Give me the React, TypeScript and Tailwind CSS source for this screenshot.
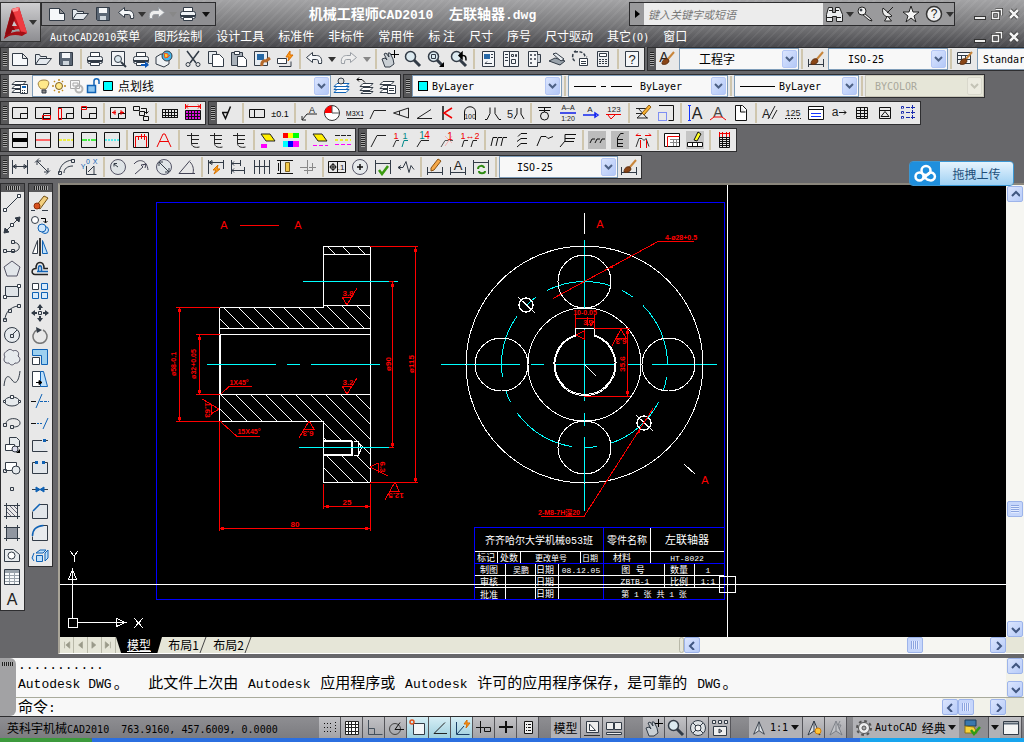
import type { ReactNode } from 'react';

const INK = '#323b46';
const BLUE = '#0f62b5';
const RED = '#f00000';

interface LabelProps {
  x: number;
  y: number;
  s?: number;
  c?: string;
  children: ReactNode;
}

function T({ x, y, s = 9, c = '#222', children }: LabelProps) {
  return (
    <text x={x} y={y} fontSize={s} fill={c} stroke="none" textAnchor="middle" fontFamily="Liberation Sans, Noto Sans CJK SC, sans-serif">
      {children}
    </text>
  );
}

const sheet = <path d="M1.5 3.5h10l5 5v7h-15zM11.5 3.5v5h5" fill="#f6f8fa" />;
const floppy = (
  <>
    <path d="M2.5 2.5h13v13h-12l-1-1z" fill="#5b6775" />
    <path d="M5 3h8v5h-8z" fill="#f4f6f8" stroke="none" />
    <path d="M6 11h6v4h-6z" fill="#cdd5dc" stroke="none" />
  </>
);
const folder = <path d="M1.5 14.5v-10h4l1 2h6v2M1.5 14.5l4-6h12l-5 6z" fill="#e4e9ee" />;
const printer = (
  <>
    <path d="M4.5 6v-3.5h9v3.5" fill="#fff" />
    <rect x="1.5" y="6.5" width="15" height="7" rx="2" fill="#eef1f4" />
    <path d="M2 11h14" strokeWidth="2" />
    <path d="M4.5 12.5h9v3h-9z" fill="#fff" />
  </>
);
const undo = <path d="M7.5 2.5l-6 5 6 5v-3h4c2 0 2 2 2 4h3c1-6-2-8-5-8h-4z" fill="#f4f6f8" />;
const redo = <path d="M10.5 2.5l6 5-6 5v-3h-4c-2 0-2 2-2 4h-3c-1-6 2-8 5-8h4z" fill="#eee" stroke="#9a9fa5" />;
const lens = (
  <>
    <path d="M10 10l6 6" strokeWidth="3" />
    <circle cx="6.5" cy="6.5" r="5" fill="#dceaf0" strokeWidth="1.5" />
  </>
);
const hand = (
  <>
    <path d="M1 9l3-1 2 2-3-6 2-1 3 4-1-4 2 0 3 6 1 5-4 3h-5z" fill="#c9cfd4" />
    <path d="M13.5 0v8M10 4.5h8" stroke="#000" />
  </>
);
const brush = (
  <>
    <path d="M10 9l6-7" stroke="#c8853a" strokeWidth="2" />
    <path d="M4 14c0-4 3-6 6-5l1 2c-1 3-4 4-7 3z" fill="#8a4516" stroke="#5c2c0c" />
  </>
);
const layers = <path d="M4 4.5h11l-3 3h-11zM4 8.5h11l-3 3h-11zM4 12.5h11l-3 3h-11z" fill="#fff" />;
const flange = <path d="M1.5 3.5h15v11h-15zM16.5 9.5h-7v5" stroke="#111" />;
const box = <path d="M1.5 1.5h15v15h-15z" stroke="#111" />;
const datum = <path d="M3 4.5h12M7.5 2v10c0 4 4 5 8 4M15 8.5h-7M14 12.5h-6" stroke="#222" />;
const sponge = <path d="M2 3h9l5 7h-9z" fill="#ffee00" stroke="#222" />;
const compass = <path d="M9 2l6 14-6-4-6 4zM9 2v10" fill="#dde1e5" />;

const icons: Record<string, ReactNode> = {
  New: sheet,
  Open: folder,
  Save: floppy,
  Plot: printer,
  Preview: <><path d="M2.5 1.5h13v14h-13z" fill="#f2f4f6" /><circle cx="9" cy="9" r="3.5" fill="#dbe8ee" /><path d="M12 12l5 5" strokeWidth="2" /></>,
  Publish: <>{printer}<path d="M9 14h4v-3l4 4-4 3v-2h-4z" fill="#0b57b8" stroke="none" /></>,
  'Plot 3D': <><path d="M1 7l5-3 8 2v8l-5 3-8-3z" fill="#eef1f4" /><circle cx="12" cy="6" r="5" fill="#44b5e8" /><path d="M9 3l4 1 0 3-3 1zM12 8l3-3" fill="#ffcf24" stroke="#e8522a" /></>,
  Cut: <><path d="M3 1l9 12M15 1l-9 12" strokeWidth="1.5" /><circle cx="4" cy="14.5" r="2" /><circle cx="14" cy="14.5" r="2" /></>,
  Copy: <><path d="M1.5 1.5h8v12h-8z" fill="#e7ebee" /><path d="M5.5 4.5h7l4 4v8h-11z" fill="#fff" /></>,
  Paste: <><path d="M1.5 2.5h11v13h-11z" fill="#a9b1b9" /><path d="M4.5 1.5h5v3h-5z" fill="#fff" /><path d="M7.5 6.5h6l3 3v7h-9z" fill="#fff" /></>,
  'Match properties': <><path d="M1.5 1.5h13v14h-13z" fill="#e8edf2" /><path d="M4 4h7v6h-7z" fill="#2568a5" stroke="none" /><path d="M9 16c-1-4 2-6 4-5l4-3" stroke="#b5692a" strokeWidth="3" /></>,
  'Block editor': <><path d="M1.5 8.5h9v5h-9z" fill="#fff" /><path d="M3 16.5h12v-5" /><path d="M14 1l-4 6h3l-1 4 5-6h-3z" fill="#ff9d1b" stroke="#d86c00" /></>,
  Undo: undo,
  Redo: redo,
  Pan: hand,
  Zoom: lens,
  'Zoom window': <>{lens}<path d="M4.5 4.5h4v4h-4z" /><path d="M17 12v5h-5z" fill="#000" stroke="none" /></>,
  'Zoom previous': <>{lens}<path d="M9 5.5h4c3 0 3 2 3 5M9 5.5l3-3v6z" stroke="#000" strokeWidth="1.5" /></>,
  Properties: <><path d="M3.5 1.5h12v15h-12z" fill="#f4f6f8" /><path d="M5 4h6v5h-6z" fill="#2769a8" stroke="none" /><path d="M6 13.5h7M6 13.5l2-2M12 4.5h2M12 7.5h2" /></>,
  'Design center': <><path d="M1.5 1.5h15v15h-15zM7.5 2v14" fill="#f4f6f8" /><path d="M3 4.5h3M3 7.5h3M3 10.5h3M9.5 4.5h2v2h-2zM13.5 4.5h1v2h-1zM9.5 9.5h4v4h-4z" /></>,
  'Tool palettes': <><path d="M3.5 1.5h9v15h-9z" fill="#f4f6f8" /><path d="M12.5 4.5h3v8h-3" fill="#ccd2d8" /><path d="M5.5 4.5h1v1h-1zM9.5 4.5h1v1h-1zM5.5 8.5h1v1h-1zM9.5 8.5h1v1h-1zM5.5 12.5h1v1h-1z" /></>,
  'Sheet set': <><path d="M1 11l6-3 10 3-5 4z" fill="#9aa3ab" /><path d="M5 4l3-1 8 6-3 2z" fill="#e8ecef" /></>,
  Markup: <><path d="M4 2c4-1 9 0 10 4l2 1M2 4c-1 4 0 6 2 7M3 2l2-1" strokeDasharray="3 1.5" strokeWidth="1.5" /><path d="M8.5 8.5h8v7h-8zM10 11.5h5M10 13.5h5" fill="#fff" /></>,
  Calculator: <><path d="M3.5 1.5h11v15h-11z" fill="#eef0f2" /><path d="M5.5 3.5h7v3h-7z" fill="#fff" /><path d="M5 9.5h8M5 11.5h8M5 13.5h8" strokeDasharray="2 1" /></>,
  Help: <><path d="M2.5 1.5h13v15h-13z" fill="#f4f6f8" /><T x={9} y={14} s={13}>?</T></>,
  'Text style': <><T x={6} y={12} s={14}>A</T>{brush}</>,
  'Dimension style': <><path d="M1.5 9v8M16.5 9v8M2 14.5h14" />{brush}</>,
  'Table style': <><path d="M1.5 2.5h13v11h-13zM2 5.5h12M2 9.5h12M5.5 5v8M9.5 5v8" fill="#f6f8fa" />{brush}</>,
  'Layer manager': <>{layers}<path d="M9.5 7.5h7v9h-7z" fill="#fff" /><path d="M11 10h4" stroke={BLUE} strokeWidth="2" /><path d="M11 13.5h4M11 15.5h4" strokeDasharray="1 1" /></>,
  'Layer current': <><path d="M4 6.5h12l-3 3h-12zM4 9.5h12l-3 3h-12zM4 12.5h12l-3 3h-12z" fill="#fff" stroke={BLUE} /><circle cx="8" cy="4" r="3" fill="#ddd" /></>,
  'Layer previous': <><path d="M7 6.5h10l-3 3h-10zM7 10.5h10l-3 3h-10zM7 14.5h10l-2 2h-10z" fill="#fff" /><path d="M1 2.5h5l3 3M1 2.5l2-2M1 2.5l2 2" stroke="#000" /></>,
  'Layer states': <>{layers}<path d="M8.5 8.5h8v8h-8zM10 11.5h5M10 13.5h5" fill="#fff" /></>,
  'Frame A': flange,
  'Frame B': <>{flange}<path d="M8.5 11.5h8v4h-8z" stroke={RED} /></>,
  'Frame C': <>{flange}<path d="M1.5 4.5h3v11h-3z" stroke={RED} /></>,
  'Frame D': <>{flange}<path d="M1.5 2.5h5v3h-5z" stroke={RED} /></>,
  'Frame E': <>{flange}<path d="M3 8.5h4M11 8.5h4M4 8.5l2-2v4zM14 8.5l-2-2v4z" stroke={RED} /></>,
  Relation: <path d="M1.5 2.5h6v4h-6zM7.5 7.5h5v4h-5zM11.5 12.5h5v4h-5zM9 4.5h5.5v5M14.5 9.5l-2-2M14.5 9.5l2-2" stroke="#111" />,
  Parts: <path d="M1 5.5h16M1 8.5h16M1 11.5h16M1 13.5h16M1.5 5v9M4.5 5v9M7.5 5v9M10.5 5v9M13.5 5v9M16.5 5v9" stroke="#111" />,
  'Parts list': <><path d="M1.5 6.5h15v9h-15z" fill="#e010e0" stroke="#111" /><path d="M1 9.5h16M1 12.5h16M4.5 7v9M7.5 7v9M10.5 7v9M13.5 7v9" stroke="#111" /><path d="M1 2.5h16M1.5 0v5M16.5 0v5M4 .5l-2 2 2 2M14 .5l2 2-2 2" stroke={RED} /></>,
  Roughness: <path d="M3 8.5h6M3.5 8.5l3 6 5-12" stroke="#111" strokeWidth="1.5" />,
  Tolerance: <path d="M1.5 5.5h15v8h-15zM6.5 6v7" stroke="#111" />,
  Deviation: <T x={9} y={13} s={9} c="#000">±0.1</T>,
  'Datum leader': <><path d="M2 16l5-6h10M2 16v-4M2 16h4" stroke="#222" /><T x={12} y={9} s={9}>A</T></>,
  Target: <><circle cx="9" cy="9" r="7.5" stroke="#333" fill="#fff" /><path d="M9 9v-7.5a7.5 7.5 0 0 0-7.5 7.5z" fill="#f00" stroke="none" /><path d="M9 1v8h8" stroke="#555" /></>,
  Thread: <><T x={9} y={12} s={7} c="#000">M3X1</T><path d="M1 14.5h16" stroke="#222" /></>,
  'Edge chamfer': <path d="M1 15l4-8.5h12" stroke="#222" />,
  Taper: <path d="M16.5 4v10l-15-5zM7.5 7v4" stroke="#222" />,
  Slope: <path d="M2 14.5h15M2 14.5l14-9" stroke="#222" />,
  Weld: <><path d="M5 2v14" stroke="#444" strokeWidth="2" /><path d="M14 4l-8 5 8 5" stroke={RED} strokeWidth="1.5" /></>,
  'Arc 100': <><path d="M3.5 16v-8c0-7 11-7 11 0v8" stroke="#111" /><T x={9} y={15} s={7}>100</T></>,
  Groove: <path d="M1 15.5h2l3-6v-6M17 15.5h-2l-4-6v-6" stroke="#111" />,
  'Groove 5': <><T x={3} y={14} s={11}>5</T><path d="M7 15l3-5v-6M17 15l-3-5v-6" stroke="#111" /></>,
  Center: <><path d="M2 3.5h13M3 6.5h11M8.5 4v4" stroke="#111" /><circle cx="8.5" cy="12" r="4" stroke="#111" /></>,
  Section: <><T x={9} y={6} s={7}>A–A</T><path d="M1 9h16" stroke="#4550e8" strokeWidth="2" /><T x={9} y={17} s={7}>1:20</T></>,
  View: <><T x={8} y={8} s={8}>A</T><path d="M1 11h13M16 11l-3-2v4z" stroke="#1528f0" strokeWidth="1.5" /></>,
  Elevation: <><T x={9} y={8} s={8}>123</T><path d="M1 10.5h15M3 11l3 4 4-4" stroke={RED} /></>,
  Edit: <><path d="M2 4.5h12M4 4l9 10M13 5l-10 9h11M2 9.5h10" stroke="#222" /><path d="M8 9l7-8 2 2-7 8z" fill="#f8b232" stroke="#8d5c10" /></>,
  Detail: <><path d="M2 1.5h14.5v15h-5" stroke="#111" /><path d="M1.5 8.5h8v8h-8z" stroke="#1434ff" strokeDasharray="1 1" /></>,
  Text: <><path d="M2 1.5h3M3.5 2v14M2 16.5h3" stroke="#1434ff" /><T x={11} y={15} s={16}>A</T></>,
  'Text arc': <><T x={9} y={13} s={14} c="#444">A</T><path d="M1 16l4-3h8l4 3" stroke={RED} /></>,
  Page: <path d="M3.5 1.5h7l4 4v11h-11zM8.5 2v6h5" stroke="#111" fill="#fff" />,
  'Text edit': <><T x={5} y={14} s={12}>A</T><path d="M7 15l7-13M11 15l5-9" stroke="#222" /></>,
  Number: <><T x={9} y={12} s={9}>125</T><path d="M1 14.5h16" stroke="#222" strokeDasharray="2 1" /></>,
  Form: <><path d="M1.5 2.5h15v13h-15zM2 5.5h14" stroke="#111" fill="#fff" /><path d="M4 9.5h10M4 12.5h10" stroke="#1434ff" /></>,
  Replace: <><T x={5} y={12} s={12}>a</T><path d="M9 8.5h7M16 8.5l-2-2M16 8.5l-2 2" stroke="#111" /></>,
  Grid: <path d="M3.5 3.5h11v11h-11zM3 6.5h12M3 9.5h12M3 12.5h12M7.5 3v12M11.5 3v12" stroke="#111" />,
  Symbol: <path d="M3.5 3.5h11v11h-11zM3 6.5h12M5 12.5l4-5 4 5z" stroke="#111" />,
  Array: <path d="M2.5 2.5h2v2h-2zM2.5 7.5h2v2h-2zM2.5 12.5h2v2h-2zM7 3.5h10M13.5 1v15M7 8.5h10M7 13.5h10" stroke="#1a2cae" strokeDasharray="4 1" />,
  'Line thick': <>{box}<path d="M2 9h14" stroke="#000" strokeWidth="4" /></>,
  'Line thin': <>{box}<path d="M2 9h14" stroke="#f66" strokeWidth="2" /></>,
  'Line dashed': <>{box}<path d="M2 9h14" stroke="#ee4" strokeWidth="2" strokeDasharray="3 1" /></>,
  'Line center': <>{box}<path d="M2 9h14" stroke="#4e4" strokeWidth="2" strokeDasharray="5 1 2 1" /></>,
  'Line hidden': <>{box}<path d="M2 9h14" stroke="#5ee" strokeWidth="2" strokeDasharray="2 1" /></>,
  'Hatch box': <>{box}<path d="M3.5 16v-10.5h11v10.5M6.5 5v4M9.5 3v5M12.5 3v6" stroke={RED} /></>,
  Compass: <path d="M2 16l6-13h2l6 13M5 10.5h9" stroke={RED} />,
  'Datum 1': datum,
  'Datum 2': datum,
  'Datum 3': datum,
  'Erase color': <><path d="M2 13h6v4h-6z" fill="#f0f" stroke="none" />{sponge}</>,
  Palette: <><path d="M1 2h5v5h-5z" fill="#f00" stroke="none" /><path d="M6 2h5v5h-5z" fill="#ff0" stroke="none" /><path d="M11 2h6v5h-6z" fill="#0f0" stroke="none" /><path d="M1 10h5v6h-5z" fill="#0ff" stroke="none" /><path d="M6 10h5v6h-5z" fill="#00f" stroke="none" /><path d="M11 10h6v6h-6z" fill="#f0f" stroke="none" /></>,
  'Erase line': <>{sponge}<path d="M2 14.5h15" stroke="#f0f" strokeDasharray="4 2" /></>,
  'Line types': <><path d="M1 4.5h16" stroke="#222" strokeDasharray="5 1" /><path d="M1 9h16" stroke="#ee3" strokeWidth="2" strokeDasharray="3 2" /><path d="M1 13.5h16" stroke="#f0f" strokeDasharray="4 2" /></>,
  Leader: <path d="M2 16l6-11.5h9" stroke="#222" />,
  'Leader 1-1': <><path d="M1 16l3-6.5h3" stroke="#333" /><path d="M10 16l2-6.5h4" stroke="#088" /><T x={4} y={8} s={9} c={RED}>1</T><T x={13} y={8} s={9} c="#088">1</T></>,
  'Leader 14': <><path d="M2 16l4-6.5h8" stroke="#222" /><T x={7} y={8} s={10} c="#088">1</T><T x={12} y={8} s={10} c={RED}>4</T></>,
  'Leader delete': <><path d="M3 16l4-6.5h8" stroke="#555" /><path d="M7 5l7 7M14 5l-7 10" stroke="#f7b0b0" /><T x={12} y={9} s={10} c={RED}>1</T></>,
  'Leader 1-2': <><path d="M1 16l2-6.5h4M10 16l2-6.5h4" stroke="#222" /><T x={9} y={8} s={9} c={RED}>1↔2</T></>,
  'Align 1': <path d="M1 15l2-8.5h4M6 15l2-8.5h4M11 15l2-8.5h4" stroke="#111" />,
  'Align 2': <path d="M5 5.5l3-3h6M4 10.5l4-3h6M4 16l4-3.5h6" stroke="#111" />,
  'Align 3': <path d="M1 15l4-9.5h5l2 2 5-2" stroke="#111" />,
  'Align 4': <path d="M1 16l5-6v-6.5h11M6 7.5h10M6 10.5h9" stroke="#111" />,
  'Row marks': <><path d="M0 0h18v18h-18z" fill="#bcbcbc" stroke="none" /><path d="M2 12l2-4h3M7 12l2-4h3M12 12l2-4h3" stroke="#111" /></>,
  'Column marks': <><path d="M0 0h18v18h-18z" fill="#bcbcbc" stroke="none" /><path d="M6.5 16v-9l3-4.5h3M7 8.5h5M7 12.5h5M7 15.5h5" stroke="#111" /></>,
  Spread: <><path d="M2 16l3-8.5h3l2 2 2-2 3 8" stroke="#333" /><path d="M2 4.5h5M11 4.5h6M2 4.5l2-2M17 4.5l-2-2M6.5 9v8M12.5 9v8" stroke={RED} /></>,
  'Title block': <><path d="M1.5 2.5h15v13h-15z" stroke="#111" fill="#fff" /><path d="M4.5 16v-10.5h12" stroke={RED} /><path d="M7 8.5h9M7 11.5h9M10.5 8v7M13.5 8v7" stroke="#888" /></>,
  'Edit block': <><path d="M0 0h18v18h-18z" fill="#c5c5c5" stroke="none" /><path d="M1.5 11.5h15v4h-15zM6.5 12v4M11.5 12v4" fill="#fff" stroke="#111" /><path d="M8 9l4-8 3 2-4 7z" fill="#ff2" stroke="#111" /></>,
  Schedule: <><path d="M4.5 2.5h10v14h-10zM4 6.5h11M4 8.5h11M4 10.5h11M4 12.5h11M4 14.5h11M7.5 2v15M11.5 2v15" stroke="#111" /><path d="M4 2.5h11M7.5 1v5M11.5 1v5M4.5 1v5M14.5 1v5" stroke={RED} /></>,
  Linear: <path d="M1.5 2v14M16.5 2v14M2 8.5h14M2 8.5l3-2v4zM16 8.5l-3-2v4z" />,
  Aligned: <path d="M1 4.5l4-4M12 16.5l4-4M3 3l11 11M3 3v4M3 3h4M14 14v-4M14 14h-4" />,
  'Arc length': <path d="M2 15c1-8 6-12 13-13M7 15c0-4 3-7 9-7M1.5 13.5h3v3h-3zM14.5 1.5h3v3h-3z" />,
  Ordinate: <><path d="M6.5 8v8.5h10M8 14l6-6v8" /><T x={3} y={11} s={7} c={BLUE}>Y</T><T x={8} y={6} s={7} c={BLUE}>0</T><T x={15} y={6} s={7} c={BLUE}>X</T></>,
  Radius: <><circle cx="9" cy="9" r="7.5" fill="#dfe4e7" stroke="#556" /><path d="M9 9l-4-3M5 5.5v3M5 5.5h3" /></>,
  Jogged: <path d="M2 6c5-6 13-4 14 6M3 16l8-7-2-2 5-1M14 6l-3 1M14 6l-1 4" stroke="#445" />,
  Diameter: <><circle cx="9" cy="9" r="7.5" fill="#dfe4e7" stroke="#556" /><path d="M4 4l10 10M4 4h4M4 4v4M14 14h-4M14 14v-4" /></>,
  Angular: <path d="M1 15.5h16M1 15.5l11-13M12 4c3 3 4 7 3 11" stroke="#445" />,
  Quick: <><path d="M1.5 2v14M16.5 2v9M2 4.5h14M2 4.5l3-2v4z" /><path d="M11 7l-5 5h3l-2 4 6-5h-3z" fill="#ffa51c" stroke="#d77100" /></>,
  Baseline: <path d="M1.5 2v14M10.5 2v6M14.5 9v7M2 5.5h8M2 12.5h12M2 5.5l2-2M2 5.5l2 2M2 12.5l2-2M2 12.5l2 2" />,
  Continue: <path d="M1.5 2v14M6.5 2v14M11.5 2v14M16.5 2v14M2 8.5h14" />,
  Space: <><path d="M1 2.5h16M1 15.5h16M4.5 3v12M2.5 5v8" stroke="#111" /><path d="M9.5 4.5h4v9h-4z" fill="#f2c94a" stroke="#85651b" /></>,
  Break: <path d="M1 9.5h7M10 9.5h7M8.5 2v14M13.5 5v8M5 12.5h9" stroke="#888" />,
  'Tolerance box': <><path d="M.5 3.5h17v11h-17zM9.5 4v10" stroke="#111" /><circle cx="5" cy="9" r="2.5" stroke="#111" /><path d="M5 5v8M1.5 9h7" stroke="#111" /><T x={13} y={12} s={8}>.1</T></>,
  'Center mark': <><circle cx="9" cy="9" r="7.5" fill="#e6eaed" stroke="#556" /><path d="M9 6v6M6 9h6" stroke="#111" strokeWidth="1.5" /></>,
  Inspection: <><path d="M1.5 2v14M16.5 2v14M2 5.5h14" /><path d="M5 12l3 4 6-8" stroke="#3a9a10" strokeWidth="2.5" /></>,
  'Jog line': <path d="M1 9.5h5l3-6 3 11 2-7 3 4M1 9.5l3-2M1 9.5l3 2" />,
  'Edit dim': <><path d="M1.5 9v8M16.5 9v8M2 14.5h14" /><path d="M5 10l7-9 3 2-7 9-3 1z" fill="#f5a848" stroke="#8a5010" /></>,
  'Edit dim text': <><path d="M1.5 9v8M16.5 9v8M2 14.5h14" /><T x={9} y={12} s={13}>A</T></>,
  'Update dim': <><path d="M1.5 2v14M16.5 2v14M2 4.5h14" /><path d="M6 11c0-4 6-4 6-1M13 13c0 3-6 3-6 0" stroke="#2d8a10" strokeWidth="2" /></>,
  Line: <path d="M3 15l12-12M.5 14.5h3v3h-3zM14.5.5h3v3h-3z" fill="#fff" />,
  'Construction line': <><path d="M1 17l16-16" /><path d="M1 17l1-5 4 4zM17 1l-1 5-4-4z" fill={INK} /><path d="M7.5 7.5h3v3h-3z" fill="#fff" /></>,
  Polyline: <path d="M4 13.5h7c7 0 7-9 0-9M.5 11.5h3v3h-3zM8.5 2.5h3v3h-3zM8.5 11.5h3v3h-3z" />,
  Polygon: <path d="M9 1l8 6-3 9h-10l-3-9z" fill="#e2e6ea" stroke="#556" />,
  Rectangle: <><path d="M2.5 4.5h13v10h-13z" fill="#dfe3e7" /><path d="M.5 13.5h3v3h-3zM14.5 2.5h3v3h-3z" fill="#fff" /></>,
  Arc: <path d="M2 16c0-7 5-13 13-14M.5 14.5h3v3h-3zM5.5 5.5h3v3h-3zM14.5.5h3v3h-3z" />,
  Circle: <><circle cx="9" cy="9" r="7.5" fill="#e6eaed" /><path d="M10 8l4-4M7.5 8.5h3v3h-3z" /></>,
  'Revision cloud': <path d="M4 3c3-3 5-1 6 0c4-2 7 2 5 5c4 3 1 8-3 7c-2 3-5 2-6 0c-5 1-6-4-4-6c-2-3 0-5 2-6z" fill="#e6eaed" stroke="#556" />,
  Spline: <path d="M1 16c1-10 4-12 8-6s7 0 8-9" />,
  Ellipse: <><ellipse cx="9" cy="9.5" rx="7.5" ry="4.5" fill="#e6eaed" /><path d="M.5 8.5h2v2h-2zM15.5 8.5h2v2h-2zM7.5 3.5h3v3h-3z" fill="#fff" /></>,
  'Ellipse arc': <path d="M3 10c0-7 14-7 14-1 0 3-3 4-7 4M.5 9.5h3v3h-3zM7.5 11.5h3v3h-3z" />,
  'Insert block': <><path d="M6.5 1.5h7l3 3v6h-10z" fill="#e6eaed" /><path d="M2.5 8.5h9v6h-9z" fill="#fff" /><circle cx="12" cy="13" r="3" fill="#dde" /><path d="M17 13v4h-4z" fill="#000" stroke="none" /></>,
  'Make block': <><path d="M2.5 4.5h11v8h-11z" fill="#fff" /><circle cx="13" cy="12" r="4" fill="#e6eaed" /><path d="M.5 11.5h3v3h-3z" /></>,
  Point: <path d="M7.5 7.5h3v3h-3z" />,
  Hatch: <><path d="M3.5 1v16M14.5 1v16M1 3.5h16M1 14.5h16" /><path d="M4 6l8 8M4 10l4 4M7 4l7 7M11 4l3 3" stroke="#667" /></>,
  Gradient: <><path d="M4 4h10v10h-10z" fill="#9096a0" stroke="none" /><path d="M3.5 1v16M14.5 1v16M1 3.5h16M1 14.5h16" /></>,
  Region: <><path d="M1.5 3.5h9l6 5v7h-15z" fill="#e6eaed" /><circle cx="8.5" cy="9.5" r="3.5" fill="#fff" /></>,
  Table: <><path d="M1.5 1.5h15v15h-15z" fill="#f8fafb" /><path d="M2 3.5h14" strokeWidth="3" stroke="#9aa3ab" /><path d="M2 7.5h14M2 10.5h14M2 13.5h14M6.5 4v12M11.5 4v12" stroke="#9aa3ab" /></>,
  'Multiline text': <T x={9} y={15} s={16}>A</T>,
  Erase: <><path d="M5 12l8-10 4 2-8 11z" fill="#f2cf7e" stroke="#725015" /><circle cx="6" cy="12" r="3" fill="#d8521d" stroke="#8c2d08" /><path d="M0 16.5h4M11 16.5h6" /></>,
  'Copy object': <><circle cx="4" cy="4" r="3.5" fill="#fff" /><path d="M10 2.5h4.5v4M14.5 7l-2-2M14.5 7l2-2" stroke="#000" /><circle cx="14" cy="14" r="3.5" fill="#cfe6fb" stroke={BLUE} /><circle cx="11" cy="12" r="4" fill="#cfe6fb" stroke={BLUE} /></>,
  Mirror: <><path d="M1.5 15.5h5v-13z" fill="#fff" /><path d="M11.5 15.5h5l-5-13z" fill="#bfe0fa" stroke={BLUE} /><path d="M9 0v18" stroke="#000" strokeWidth="1.5" /></>,
  Offset: <><path d="M17 14.5h-13c-4 0-4-6 1-6 0-8 8-8 8 0h4" stroke="#222" strokeWidth="1.5" /><path d="M17 11.5h-11M7.5 11v-3c0-3 3-3 3 0v3" stroke={BLUE} strokeWidth="1.5" /></>,
  'Array objects': <><path d="M1.5 1.5h6v6h-6z" fill="#fff" /><path d="M10.5 1.5h6v6h-6zM1.5 10.5h6v6h-6zM10.5 10.5h6v6h-6z" fill="#d8ebfb" stroke={BLUE} /></>,
  Move: <><path d="M7.5 7.5h3v3h-3z" /><path d="M9 1v5M9 12v5M1 9h5M12 9h5" strokeWidth="2" /><path d="M6 4l3-4 3 4zM6 14l3 4 3-4zM4 6l-4 3 4 3zM14 6l4 3-4 3z" fill={INK} stroke="none" /></>,
  Rotate: <><path d="M6 4a7 7 0 1 0 6 0" stroke="#777" strokeWidth="1.5" /><path d="M5 1l6 3-5 3z" fill={INK} stroke="none" /></>,
  Scale: <><path d="M1.5 1.5h15v15h-6v-9h-9z" fill="#9dd0ef" stroke={BLUE} /><path d="M1.5 9.5h7v7h-7z" fill="#fff" /></>,
  Stretch: <><path d="M1.5 1.5h8v15h-8z" fill="#fff" /><path d="M9.5 1.5h3l4 15h-7z" fill="#bfe0fa" stroke={BLUE} /><path d="M5 12.5h6M11 12.5l-3-2v4z" stroke="#000" fill="#000" /></>,
  Trim: <><path d="M0 9.5h5" stroke="#111" /><path d="M9 9.5h9" stroke={BLUE} strokeDasharray="3 1" /><path d="M5 16l6-14" stroke={BLUE} /></>,
  Extend: <><path d="M0 9.5h5" stroke="#111" /><path d="M6 9.5h6" stroke={BLUE} strokeDasharray="2 1" /><path d="M12 15l5-11" stroke={BLUE} /></>,
  'Break point': <><path d="M11 4.5h-9.5v11h15M15 4.5h2" fill="#e2e6ea" /><path d="M12 3h3v3h-3z" fill={BLUE} stroke="none" /></>,
  'Break object': <><path d="M4 4.5h-2.5v11h15v-11h-2.5" fill="#e2e6ea" /><path d="M4 3h3v3h-3zM11 3h3v3h-3z" fill={BLUE} stroke="none" /></>,
  Join: <><path d="M1 9.5h16" /><path d="M5 7l4 2.5-4 2.5zM13 7l-4 2.5 4 2.5z" fill={BLUE} stroke={BLUE} /></>,
  Chamfer: <><path d="M9 2.5h7.5v14h-15v-7" fill="#e2e6ea" /><path d="M2 9l7-7" stroke={BLUE} strokeWidth="1.5" /></>,
  Fillet: <><path d="M12 1.5h4.5v15h-15v-4" fill="#e8ebee" /><path d="M1.5 12c0-6 4-10 11-10.5" stroke={BLUE} strokeWidth="1.5" /></>,
  Explode: <path d="M5.5 9.5h6v6h-6zM5 7l4-3h6l-3 3zM14 7l3-3v8l-3 3zM3 15l-2-3 2-5" fill="#bfe0fa" stroke={BLUE} />,
  Binoculars: <><path d="M3.5 2.5h4v5h3v-5h4l3 7v7h-6v-5h-4v5h-6v-7z" fill="#eceef0" stroke="#222" /><path d="M2 12.5h5M11 12.5h5M4 5.5h3M11 5.5h3" stroke="#222" /></>,
  Key: <><path d="M8 8l7 6 1 2-3-1-7-6" fill="#eee" stroke="#222" /><circle cx="6" cy="6" r="4" fill="#f2f2f2" stroke="#222" /><circle cx="5" cy="5" r="1" fill="#333" /></>,
  Satellite: <><path d="M4 3c-2 6 3 11 9 8z" fill="#eee" stroke="#222" /><path d="M8 8l6-6" stroke="#222" /><path d="M8.5 11l-3 5h7z" fill="#eee" stroke="#222" /></>,
  Favorites: <path d="M9 1l2 6h6l-5 4 2 6-5-4-5 4 2-6-5-4h6z" fill="#f4f4f4" stroke="#222" />,
  'Info center': <><circle cx="9" cy="9" r="7.5" fill="#f2f2f2" stroke="#333" strokeWidth="1.5" /><T x={9} y={13} s={12}>?</T></>,
  Snap: <path d="M3 4.5h8M3 8.5h8M3 12.5h8M14.5 3v12" stroke="#111" strokeDasharray="1 2" />,
  'Grid display': <path d="M2.5 2.5h13v13h-13zM2 5.5h14M2 8.5h14M2 12.5h14M5.5 2v14M8.5 2v14M12.5 2v14" stroke="#222" fill="#fff" />,
  Ortho: <path d="M3.5 1v14.5h14M4 9.5h5.5v6" stroke="#44505c" />,
  Polar: <><circle cx="8" cy="10" r="5.5" stroke="#444" /><path d="M8 10.5h9M8 10.5l5-7" stroke="#111" /></>,
  Osnap: <><path d="M4.5 4.5h11v11h-11z" fill="#f2f5f7" /><circle cx="3" cy="3" r="2" stroke="#e0501a" strokeWidth="1.5" /></>,
  Otrack: <path d="M3 14.5h13M3 14.5l11-11" stroke="#222" />,
  DUCS: <><path d="M3.5 3v12.5h13M4 15l7-8" stroke="#1a3f66" /><path d="M14 1l-3 4h3l-1 4 4-5h-3z" fill="#ff9d1b" stroke="#d86c00" /></>,
  Dyn: <path d="M5.5 2v12M1 8.5h8M9.5 8.5h6v4h-6z" stroke="#111" />,
  LWT: <path d="M9 2v12M2 8h14" stroke="#111" strokeWidth="2" />,
  'Quick properties': <><path d="M5.5 2.5h8v12h-8z" stroke="#111" fill="#eee" /><path d="M7 5.5h1M9 5.5h3M7 8.5h1M9 8.5h3M7 11.5h1M9 11.5h3" stroke="#111" /></>,
  Layout: <><path d="M3.5 2.5h12v11h-12z" fill="#eee" /><path d="M6.5 5v6.5h6z" fill="#fff" /><path d="M1 16.5h16" stroke="#333" /></>,
  'Quick view': <path d="M1.5 3.5h7v7h-7zM9.5 3.5h7v7h-7zM1.5 13.5h15v2h-15z" fill="#eee" />,
  Wheel: <><circle cx="9" cy="9" r="7.5" fill="#dde1e4" /><circle cx="9" cy="9" r="3" fill="#f4f4f4" /><path d="M4 4l3 3M14 4l-3 3M4 14l3-3M14 14l-3-3" /></>,
  'Show motion': <path d="M1.5 1.5h3v3h-3zM7.5 1.5h3v3h-3zM13.5 1.5h3v3h-3zM2.5 7.5h13v9h-13zM8 10v4l3-2z" fill="#eee" />,
  'Annotation visibility': <>{compass}<circle cx="13" cy="12" r="3" fill="#ffc637" stroke="#d27f08" /></>,
  'Annotation auto scale': <g opacity=".4">{compass}<path d="M13 2l-2 4h3l-2 4" /></g>,
  Lock: <><path d="M2 2h11v6h-11z" fill="#3a79ad" stroke="#1d3e5c" /><path d="M2 8l9 1 3 6h-12z" fill="#f8d33a" stroke="#8e7412" /><path d="M8 12l3 4 6-7" stroke="#2f9a14" strokeWidth="2.5" /></>,
  'Clean screen': <><path d="M1.5 2.5h15v13h-15z" fill="#f4f4f4" /><path d="M2 4.5h14" strokeWidth="2" stroke="#5b6775" /></>,
};

function Icon({ name }: { name: string }) {
  return (
    <svg viewBox="0 0 18 18" className="size-[18px] shrink-0" fill="none" stroke={INK} aria-hidden="true">
      {icons[name]}
    </svg>
  );
}

function Caret({ color = '#111' }: { color?: string }) {
  return (
    <svg viewBox="0 0 8 5" className="h-[5px] w-2 shrink-0" aria-hidden="true">
      <path d="M0 0h8L4 5z" fill={color} />
    </svg>
  );
}

function DropButton({ label, color, tight }: { label: string; color?: string; tight?: boolean }) {
  return (
    <button aria-label={label} className={`flex h-full shrink-0 items-center justify-center ${tight ? 'w-2' : 'w-3'}`}>
      <Caret color={color} />
    </button>
  );
}

// "|" is a separator, a trailing "▾" adds a history drop-down
function Tools({ items, tight }: { items: string[]; tight?: boolean }) {
  return (
    <>
      {items.map((item, i) => {
        if (item === '|') return <span key={i} className="mx-[2px] h-5 w-[2px] shrink-0 bg-[#cfc6ae]" />;
        const name = item.replace('▾', '');
        return (
          <span key={i} className="flex h-full shrink-0 items-center">
            <button aria-label={name} className="flex h-full w-[23px] items-center pl-[2px]">
              <Icon name={name} />
            </button>
            {item.endsWith('▾') && <DropButton label={`${name} history`} color={name === 'Redo' ? '#888' : '#333'} tight={tight} />}
          </span>
        );
      })}
    </>
  );
}

function Toolbar({ children }: { children: ReactNode }) {
  return (
    <div role="toolbar" className="flex h-6 shrink-0 items-center border border-[#2e2e30] bg-[#e8e8e8]">
      <span className="flex h-full w-2 shrink-0 items-center justify-center bg-[#58585a]">
        <span className="h-[14px] w-1 bg-[repeating-linear-gradient(#222_0_1px,#aaa_1px_2px)]" />
      </span>
      {children}
    </div>
  );
}

interface ComboProps {
  label: string;
  value: string;
  width: string;
  indent?: string;
  cjk?: boolean;
  disabled?: boolean;
  children?: ReactNode;
}

function Combo({ label, value, width, indent = 'pl-1', cjk, disabled, children }: ComboProps) {
  return (
    <div className={`flex h-[22px] shrink-0 items-center border p-px ${width} ${disabled ? 'border-[#c9c7ba] bg-[#e6e6d8]' : 'border-[#7f9db9] bg-[#f8f8f8]'}`}>
      {children}
      <select
        aria-label={label}
        disabled={disabled}
        className={`min-w-0 flex-1 appearance-none bg-transparent ${indent} ${cjk ? 'text-xs' : 'font-[DejaVu_Sans_Mono,monospace] text-[10px]'} ${disabled ? 'text-[#a9a89c]' : 'text-black'}`}
      >
        <option>{value}</option>
      </select>
      <span className={`pointer-events-none flex h-full w-[15px] shrink-0 items-center justify-center rounded-[2px] border ${disabled ? 'border-[#d9d8cc] bg-[#ecebe0]' : 'border-[#b5c7f5] bg-linear-to-br from-[#dbe5fe] to-[#b3c8f7]'}`}>
        <svg viewBox="0 0 9 6" width="9" height="6" fill="none" stroke={disabled ? '#c4c3b6' : '#4d6185'} strokeWidth="2">
          <path d="M1 1l3.5 3.5L8 1" />
        </svg>
      </span>
    </div>
  );
}

type Dir = 'up' | 'down' | 'left' | 'right';
const chevrons: Record<Dir, string> = { up: 'M1 6l4-4 4 4', down: 'M1 3l4 4 4-4', left: 'M6 1l-4 4 4 4', right: 'M3 1l4 4-4 4' };

function ScrollButton({ dir }: { dir: Dir }) {
  return (
    <button aria-label={`Scroll ${dir}`} className="flex size-4 shrink-0 items-center justify-center rounded-[2px] border border-[#9db4ea] bg-linear-to-br from-[#dbe5fe] to-[#b7cbf8]">
      <svg viewBox="0 0 9 9" className="size-[9px]" fill="none" stroke="#405680" strokeWidth="2">
        <path d={chevrons[dir]} />
      </svg>
    </button>
  );
}

function Thumb({ vertical }: { vertical?: boolean }) {
  return (
    <span className="flex size-4 shrink-0 items-center justify-center rounded-[2px] border border-[#9db4ea] bg-[#c6d6fb]">
      <span className={`size-2 ${vertical ? 'bg-[repeating-linear-gradient(#8ca5e0_0_1px,#e4ecff_1px_2px)]' : 'bg-[repeating-linear-gradient(90deg,#8ca5e0_0_1px,#e4ecff_1px_2px)]'}`} />
    </span>
  );
}

function WindowControls({ label }: { label: string }) {
  return (
    <div className="flex items-center gap-[5px] pr-1">
      <button aria-label={`Minimize ${label}`} className="flex h-3 w-3 items-end">
        <span className="h-1 w-full border border-[#333] bg-[#eee]" />
      </button>
      <button aria-label={`Restore ${label}`}>
        <svg viewBox="0 0 12 12" className="size-3" fill="none">
          <path d="M4.5 1.5h6v6M1.5 4.5h6v6h-6z" stroke="#333" strokeWidth="3" />
          <path d="M4.5 1.5h6v6M1.5 4.5h6v6h-6z" stroke="#f4f4f4" strokeWidth="1.5" />
        </svg>
      </button>
      <button aria-label={`Close ${label}`}>
        <svg viewBox="0 0 12 12" className="size-3" fill="none">
          <path d="M2 2l8 8M10 2l-8 8" stroke="#333" strokeWidth="4" />
          <path d="M2 2l8 8M10 2l-8 8" stroke="#f4f4f4" strokeWidth="2.5" />
        </svg>
      </button>
    </div>
  );
}

const menus = ['图形绘制', '设计工具', '标准件', '非标件', '常用件', '标 注', '尺寸', '序号', '尺寸驱动'];

function Header() {
  return (
    <header className="flex h-[47px] shrink-0 bg-[repeating-linear-gradient(135deg,rgba(255,255,255,0.05)_0_2px,transparent_2px_6px),linear-gradient(#a3a3a5,#7c7c7e_50%,#48484c)] pt-[2px] text-white">
      <button aria-label="Application menu" className="flex h-10 w-[41px] shrink-0 items-center border border-[#333] bg-linear-to-b from-[#cfcfd1] to-[#8e8e92]">
        <svg viewBox="0 0 28 36" className="h-9 w-7 shrink-0" aria-hidden="true">
          <path d="M4 30l7-25 7-2 8 26-6 2-2-6-7 1-2 5z" fill="#c4161c" />
          <path d="M11 5l3 9-2 8 2 4-3 0-2 5-6 4z" fill="#8c0a10" />
          <path d="M13 17l3 5h-5z" fill="#c9c9cb" />
          <path d="M11 5l7-2 8 26-5 1-7-18z" fill="#ee3c42" />
          <path d="M3 34c5-6 14-8 23-5l-5 3c-7-2-12-1-18 2z" fill="#a50f15" />
          <path d="M11 5l7-2-1 4-5 1z" fill="#ff8a8c" />
        </svg>
        <Caret color="#333" />
      </button>
      <div className="flex min-w-0 flex-1 flex-col">
        <div className="flex h-6 items-center justify-between">
          <div className="flex h-6 w-[175px] shrink-0 items-center border border-[#2b2b2d] bg-[#8f8f92] pl-1">
            <Tools items={['New', 'Open', 'Save', 'Undo▾', 'Redo▾', 'Plot']} tight />
            <DropButton label="Customize" />
          </div>
          <h1 className="flex shrink-0 items-baseline text-sm font-bold whitespace-pre">
            机械工程师<span className="font-[Liberation_Mono,monospace] text-[13px]">CAD2010{'  '}</span>左联轴器
            <span className="font-[Liberation_Mono,monospace] text-[13px]">.dwg</span>
          </h1>
          <div className="flex items-center gap-[19px]">
            <div className="flex h-6 shrink-0 items-center border border-[#2b2b2d] bg-[#9a9a9c]">
              <button aria-label="Collapse search" className="flex w-[14px] justify-center">
                <svg viewBox="0 0 5 8" className="h-2 w-[5px]"><path d="M0 0l5 4-5 4z" fill="#000" /></svg>
              </button>
              <input
                aria-label="搜索"
                placeholder="键入关键字或短语"
                className="h-[22px] w-[179px] bg-[#ececec] pl-1 text-[11px] italic placeholder:text-[#777]"
              />
              <Tools items={['Binoculars▾', 'Key', 'Satellite', 'Favorites', 'Info center▾']} tight />
            </div>
            <WindowControls label="application" />
          </div>
        </div>
        <div className="flex h-[21px] items-center justify-between">
          <nav className="flex items-center gap-[14px] pl-[9px] text-xs whitespace-nowrap">
            <button className="flex items-baseline"><span className="font-[DejaVu_Sans_Mono,monospace] text-[10px]">AutoCAD2010</span>菜单</button>
            {menus.map((m) => (
              <button key={m}>{m}</button>
            ))}
            <button className="flex items-baseline">其它<span className="font-[DejaVu_Sans_Mono,monospace] text-[10px]">(O)</span></button>
            <button>窗口</button>
          </nav>
          <WindowControls label="document" />
        </div>
      </div>
    </header>
  );
}

function Toolbars() {
  return (
    <div className="flex flex-col gap-[3px] overflow-hidden">
      <div className="flex gap-[2px]">
        <Toolbar>
          <Tools
            items={['New', 'Open', 'Save', '|', 'Plot', 'Preview', 'Publish', 'Plot 3D', '|', 'Cut', 'Copy', 'Paste', 'Match properties', 'Block editor', '|', 'Undo▾', 'Redo▾', '|', 'Pan', 'Zoom', 'Zoom window', 'Zoom previous', '|', 'Properties', 'Design center', 'Tool palettes', 'Sheet set', 'Markup', 'Calculator', '|', 'Help']}
          />
        </Toolbar>
        <Toolbar>
          <Tools items={['Text style']} />
          <Combo label="Text style" value="工程字" width="w-[120px]" indent="pl-[18px]" cjk />
          <Tools items={['|', 'Dimension style']} />
          <Combo label="Dimension style" value="ISO-25" width="w-[120px]" indent="pl-[18px]" />
          <Tools items={['|', 'Table style']} />
          <Combo label="Table style" value="Standard" width="w-[120px]" />
        </Toolbar>
      </div>

      <div className="flex gap-[2px]">
        <Toolbar>
          <Tools items={['Layer manager']} />
          <Combo label="Layer" value="点划线" width="w-[299px]" cjk>
            <svg viewBox="0 0 80 18" className="h-[18px] w-20 shrink-0" fill="none" stroke={INK} aria-hidden="true">
              <path d="M7 12c-5-5-3-9 3-9s6 4 2 9z" fill="#ffe98a" stroke="#a08040" />
              <path d="M8 13h4v3h-4z" fill="#888" />
              <circle cx="25" cy="9" r="3.5" fill="#ffe98a" stroke="#806020" />
              <path d="M25 2v2M25 14v2M18 9h2M30 9h2M20 4l1 1M29 4l-1 1M20 14l1-1M29 14l-1-1" stroke="#c08a20" strokeWidth="1.5" />
              <path d="M36.5 3.5h9v8h-9zM39 6h5v3h-5z" stroke="#aaa" />
              <circle cx="45" cy="12" r="3.5" stroke="#b5b5b5" strokeWidth="2" />
              <path d="M53.5 8.5h8v7h-8z" fill="#8cc5f0" stroke={BLUE} strokeWidth="1.5" />
              <path d="M60 8v-4c0-3 5-3 5 0v3" stroke={BLUE} strokeWidth="1.5" />
              <path d="M69.5 4.5h9v9h-9z" fill="#0ff" stroke="#000" />
            </svg>
          </Combo>
          <Tools items={['Layer current', 'Layer previous', 'Layer states']} />
        </Toolbar>
        <Toolbar>
          <Combo label="Color" value="ByLayer" width="w-[150px]">
            <span className="ml-1 size-[10px] shrink-0 border border-black bg-[#0ff]" />
          </Combo>
          <Tools items={['|']} />
          <Combo label="Linetype" value="ByLayer" width="w-[160px]" indent="pl-2">
            <svg viewBox="0 0 58 1" className="ml-1 h-px w-[58px] shrink-0"><path d="M0 .5h22M27 .5h5M37 .5h21" stroke="#000" /></svg>
          </Combo>
          <Tools items={['|']} />
          <Combo label="Lineweight" value="ByLayer" width="w-[125px]">
            <span className="ml-1 h-px w-[35px] shrink-0 bg-black" />
          </Combo>
          <Tools items={['|']} />
          <Combo label="Plot style" value="BYCOLOR" width="w-[119px]" indent="pl-2" disabled />
        </Toolbar>
      </div>

      <div className="flex gap-[2px]">
        <Toolbar>
          <Tools items={['Frame A', 'Frame B', 'Frame C', 'Frame D', '|', 'Frame E', 'Relation', '|', 'Parts', 'Parts list']} />
        </Toolbar>
        <Toolbar>
          <Tools
            items={['Roughness', '|', 'Tolerance', 'Deviation', '|', 'Datum leader', 'Target', 'Thread', 'Edge chamfer', 'Taper', 'Slope', 'Weld', 'Arc 100', 'Groove', 'Groove 5', '|', 'Center', 'Section', 'View', 'Elevation', '|', 'Edit', 'Detail', '|', 'Text', 'Text arc', 'Page', '|', 'Text edit', 'Number', 'Form', 'Replace', 'Grid', 'Symbol', 'Array']}
          />
        </Toolbar>
      </div>

      <div className="flex gap-[2px]">
        <Toolbar>
          <Tools
            items={['Line thick', 'Line thin', 'Line dashed', 'Line center', 'Line hidden', '|', 'Hatch box', 'Compass', '|', 'Datum 1', 'Datum 2', 'Datum 3', '|', 'Erase color', 'Palette', '|', 'Erase line', 'Line types']}
          />
        </Toolbar>
        <Toolbar>
          <Tools
            items={['Leader', 'Leader 1-1', 'Leader 14', 'Leader delete', 'Leader 1-2', '|', 'Align 1', 'Align 2', 'Align 3', 'Align 4', '|', 'Row marks', 'Column marks', 'Spread', '|', 'Title block', 'Edit block', '|', 'Schedule']}
          />
        </Toolbar>
      </div>

      <div className="flex">
        <Toolbar>
          <Tools
            items={['Linear', 'Aligned', 'Arc length', 'Ordinate', '|', 'Radius', 'Jogged', 'Diameter', 'Angular', '|', 'Quick', 'Baseline', 'Continue', 'Space', 'Break', '|', 'Tolerance box', 'Center mark', 'Inspection', 'Jog line', '|', 'Edit dim', 'Edit dim text', 'Update dim', '|']}
          />
          <Combo label="Current dimension style" value="ISO-25" width="w-[119px]" indent="pl-4" />
          <Tools items={['Dimension style']} />
        </Toolbar>
      </div>
    </div>
  );
}

function Palette({ items }: { items: string[] }) {
  return (
    <div role="toolbar" className="flex w-[25px] shrink-0 flex-col items-center self-start border border-[#2e2e30] bg-[#e8e8e8]">
      <span className="flex h-2 w-full items-center justify-center bg-[#58585a]">
        <span className="h-1 w-[14px] bg-[repeating-linear-gradient(90deg,#222_0_1px,#aaa_1px_2px)]" />
      </span>
      {items.map((name) => (
        <button key={name} aria-label={name} className="flex h-[22px] w-full items-center pl-[2px]">
          <Icon name={name} />
        </button>
      ))}
    </div>
  );
}

const drawTools = ['Line', 'Construction line', 'Polyline', 'Polygon', 'Rectangle', 'Arc', 'Circle', 'Revision cloud', 'Spline', 'Ellipse', 'Ellipse arc', 'Insert block', 'Make block', 'Point', 'Hatch', 'Gradient', 'Region', 'Table', 'Multiline text'];
const modifyTools = ['Erase', 'Copy object', 'Mirror', 'Offset', 'Array objects', 'Move', 'Rotate', 'Scale', 'Stretch', 'Trim', 'Extend', 'Break point', 'Break object', 'Join', 'Chamfer', 'Fillet', 'Explode'];

const hatchLines = Array.from({ length: 26 }, (_, i) => {
  const c = -264 + i * 15;
  return `M${240 + c} 240L${490 + c} 490`;
}).join('');

interface NoteProps {
  x: number;
  y: number;
  s?: number;
  r?: number;
  children: ReactNode;
}

function Note({ x, y, s = 8, r = 0, children }: NoteProps) {
  return (
    <text x={x} y={y} fontSize={s} textAnchor="middle" transform={r ? `rotate(${r} ${x} ${y})` : undefined}>
      {children}
    </text>
  );
}

function Drawing() {
  return (
    <svg
      className="block size-full font-[Liberation_Mono,Noto_Sans_CJK_SC,monospace]"
      fill="none"
      shapeRendering="crispEdges"
      role="img"
      aria-label="左联轴器"
    >
      <g transform="translate(-60 -185)">
        <clipPath id="cut">
          <path d="M323 247h47v8h-47zM220 308h103v-2h47v22h-150zM220 395h150v46h-47v-19h-103zM358 441h12v41h-47v-26h35z" />
        </clipPath>

        <path d="M156.5 599v-396.5h568v396.5" stroke="#00f" />

        <g stroke="#fff">
          <path d={hatchLines} clipPath="url(#cut)" />
          <path d="M323.5 307.5v-61h47v236h-47v-61h-104v-114zM323.5 254.5h47M323.5 305.5h47M220 328.5h150M220 334.5h150M220 394.5h150" />
          <path d="M220 334v60M324 441h28M324 455h28M352 441v15" strokeWidth="2" />
          <path d="M353.5 441.5h5v14h-5M358.5 442l3 6-3 7" />
        </g>

        <g stroke="#0ff">
          <path d="M303 281.5h95M207 364.5h69M287 364.5h13M311 364.5h69M299 447.5h95" />
          <path d="M441 364.5h79M531 364.5h13M554 364.5h62M628 364.5h13M652 364.5h65" />
          <path d="M584.5 240v69M584.5 328v73M584.5 413v13M584.5 437v74" />
          <circle cx="584.5" cy="364.5" r="83" pathLength="360" strokeDasharray="45 9 9 9" strokeDashoffset="-27" />
        </g>

        <g stroke="#fff">
          <circle cx="584.5" cy="364.5" r="118.5" />
          <circle cx="584.5" cy="364.5" r="56.5" />
          <circle cx="584.5" cy="281.5" r="26.5" />
          <circle cx="584.5" cy="447.5" r="26.5" />
          <circle cx="501.5" cy="364.5" r="26.5" />
          <circle cx="668.5" cy="364.5" r="26.5" />
          <circle cx="526" cy="305" r="7" strokeWidth="1.5" />
          <circle cx="644" cy="423" r="7" strokeWidth="1.5" />
          <path d="M518 297l17 16M636 415l17 16M584.5 364.5l12 12M684 464l11 10M584.5 213v21" />
          <path d="M575.5 335v-6.5h19v6.5a31 31 0 1 1-19 0" />
          <path d="M575.5 336a30 30 0 1 0 19 0" />
        </g>

        <g stroke="#f00">
          <path d="M240 225.5h39M179.5 307v114M176 307.5h44M176 421.5h46M199.5 334v60M196 334.5h24M196 394.5h24" />
          <path d="M392.5 281v167M415.5 246v237M370 246.5h48M370 482.5h48M323.5 484v25M370.5 484v47M219.5 422v109M323 506.5h47M219 528.5h151" />
          <path d="M221 394l8-7.5h23M221 422l16 14.5h23M389 281.5h5M389 447.5h5" />
          <path d="M342 297.5h10M342 297l5 8 10-17M342 386.5h10M342 386l5 8 10-16" />
          <path d="M304 429.5h11M314 429l-5-8-10 17M211.5 404v11M202 399l17 10-8 5M378.5 463v10M388 476l-18-9 8-4M390 491.5h10M399 491l-4-9-10 18" />
          <path d="M553 298.5l105-57h36M541 516.5h43l69-108" />
          <path d="M575.5 315v13M594.5 315v13M575 318.5h20M594 328.5h36M584 396.5h46M627.5 328v68M616 338.5h11M626 338l-5-9-9 17" />
          <path d="M576 335l8-4v8zM589 320l2 6 3-5M587.5 317v9" />
        </g>
        <path
          d="M178 309h3v3h-3zM178 417h3v3h-3zM198 337h3v3h-3zM198 390h3v3h-3zM391 284h3v3h-3zM391 443h3v3h-3zM414 249h3v3h-3zM414 478h3v3h-3zM326 505h3v3h-3zM365 505h3v3h-3zM221 527h3v3h-3zM365 527h3v3h-3zM626 331h3v3h-3zM626 391h3v3h-3zM608 268l5-3v3zM637 433l2-4 1 4z"
          fill="#f00"
        />

        <g fill="#f00" className="font-[Liberation_Sans,Noto_Sans_CJK_SC,sans-serif]">
          <Note x={224} y={229} s={11}>A</Note>
          <Note x={298} y={229} s={11}>A</Note>
          <Note x={600} y={228} s={11}>A</Note>
          <Note x={705} y={484} s={11}>A</Note>
          <g className="font-bold">
            <Note x={348} y={296}>3.8</Note>
            <Note x={348} y={385}>3.2</Note>
            <Note x={308} y={431} r={180}>6.3</Note>
            <Note x={205} y={410} r={90}>1.63</Note>
            <Note x={380} y={467} r={90}>6.3</Note>
            <Note x={396} y={493} r={180}>12.5</Note>
            <Note x={176} y={364} s={7} r={-90}>ø58-0.1</Note>
            <Note x={196} y={364} s={7} r={-90}>ø32+0.05</Note>
            <Note x={391} y={364} r={-90}>ø90</Note>
            <Note x={414} y={364} r={-90}>ø115</Note>
            <Note x={239} y={385} s={7}>1X45°</Note>
            <Note x={249} y={434} s={7}>15X45°</Note>
            <Note x={347} y={505}>25</Note>
            <Note x={295} y={527}>80</Note>
            <Note x={681} y={240} s={7}>4-ø28+0.5</Note>
            <Note x={559} y={515} s={7}>2-M8-7H深20</Note>
            <Note x={585} y={315} s={7}>10-0.05</Note>
            <Note x={588} y={325} s={7}>3.2</Note>
            <Note x={625} y={364} r={-90}>35.6</Note>
            <Note x={621} y={339} r={180}>6.3</Note>
          </g>
        </g>

        <path d="M474.5 599v-71.5h250M474 563.5h250M603.5 528v71M156 599.5h569" stroke="#00f" />
        <path
          d="M475 551.5h249M475 575.5h249M475 587.5h249M650.5 528v35M497.5 552v11M520.5 552v11M580.5 552v11M505.5 564v35M535.5 564v35M558.5 564v35M664.5 564v23M694.5 564v23"
          stroke="#fff"
        />
        <g fill="#fff">
          <Note x={539} y={544} s={10}>齐齐哈尔大学机械053班</Note>
          <Note x={627} y={544} s={10}>零件名称</Note>
          <Note x={687} y={544} s={11}>左联轴器</Note>
          <Note x={486} y={561} s={9}>标记</Note>
          <Note x={509} y={561} s={9}>处数</Note>
          <Note x={551} y={561} s={8}>更改单号</Note>
          <Note x={590} y={561} s={8}>日期</Note>
          <Note x={622} y={561} s={9}>材料</Note>
          <Note x={687} y={561} s={8}>HT-8022</Note>
          <Note x={489} y={573} s={9}>制图</Note>
          <Note x={521} y={573} s={8}>吴鹏</Note>
          <Note x={545} y={573} s={9}>日期</Note>
          <Note x={581} y={573} s={8}>08.12.05</Note>
          <Note x={633} y={573} s={9}>图 号</Note>
          <Note x={679} y={573} s={9}>数量</Note>
          <Note x={708} y={573} s={8}>1</Note>
          <Note x={489} y={585} s={9}>审核</Note>
          <Note x={545} y={585} s={9}>日期</Note>
          <Note x={635} y={584} s={8}>ZBTB-1</Note>
          <Note x={679} y={585} s={9}>比例</Note>
          <Note x={708} y={584} s={8}>1:1</Note>
          <Note x={489} y={598} s={9}>批准</Note>
          <Note x={545} y={597} s={9}>日期</Note>
          <Note x={654} y={597} s={8}>第 1 张 共 1 张</Note>
        </g>

        <g stroke="#fff">
          <path d="M727.5 185v900M60 584.5h2000M719.5 576.5h16v16h-16z" />
          <path d="M68.5 618.5h9v9h-9zM72.5 618v-38M78 622.5h38M68.5 579.5h8l-4-10zM116.5 618.5v8l9-4zM72.5 570v9M117 622.5h8" />
          <path d="M70 551l4 5v6M78 551l-4 5M134 618l9 10M143 618l-9 10" />
        </g>
      </g>
    </svg>
  );
}

function LayoutTabs() {
  return (
    <div className="flex h-4 shrink-0 items-stretch bg-[#e6e6d8] text-xs leading-4">
      {['M7 2v10M15 2l-6 5 6 5z', 'M13 2l-6 5 6 5z', 'M6 2l6 5-6 5z', 'M13 2v10M5 2l6 5-6 5z'].map((d, i) => (
        <button key={d} aria-label={`Tab step ${i + 1}`} className="w-[14px] border-r border-[#b8b8a8]">
          <svg viewBox="0 0 20 14" className="h-[14px] w-[13px]" fill="#9a9a8a" stroke="#9a9a8a"><path d={d} /></svg>
        </button>
      ))}
      <button className="w-[46px] bg-black text-white underline [clip-path:polygon(0_0,100%_0,90%_100%,11%_100%)]">模型</button>
      {['布局1', '布局2'].map((name) => (
        <button key={name} className="flex w-[45px] items-center justify-end whitespace-nowrap">
          {name}
          <svg viewBox="0 0 8 16" className="h-4 w-2 shrink-0" fill="none" stroke="#444"><path d="M1 16L7 0" /></svg>
        </button>
      ))}
      <span className="flex-1" />
      <span className="w-[5px] rounded-sm border border-[#b8b8a8]" />
      <div className="flex w-[34%] shrink-0 items-center justify-between bg-[#f6f6f2]">
        <ScrollButton dir="left" />
        <span className="flex-1" />
        <Thumb />
        <span className="w-[67px]" />
        <ScrollButton dir="right" />
      </div>
    </div>
  );
}

function Workspace() {
  return (
    <main className="mt-1 mb-1 flex min-h-0 flex-1">
      <Palette items={drawTools} />
      <span className="w-[3px] shrink-0" />
      <Palette items={modifyTools} />
      <section className="ml-[5px] flex min-w-0 flex-1 border-t-2 border-b border-l-2 border-t-[#8a867c] border-b-white border-l-[#a8a498]">
        <div className="flex min-w-0 flex-1 flex-col">
          <div className="min-h-0 flex-1 overflow-hidden bg-black">
            <Drawing />
          </div>
          <LayoutTabs />
        </div>
        <div className="flex w-[18px] shrink-0 flex-col items-center bg-[#f6f6f2] pt-px">
          <ScrollButton dir="up" />
          <span className="flex-1" />
          <Thumb vertical />
          <span className="h-[104px]" />
          <ScrollButton dir="down" />
          <span className="h-4 w-full bg-[#e6e6d8]" />
        </div>
      </section>
    </main>
  );
}

function Mono({ children }: { children: ReactNode }) {
  return <span className="font-[Liberation_Mono,monospace] text-[13px] whitespace-pre">{children}</span>;
}

function CommandLine() {
  return (
    <section className="flex h-[58px] shrink-0 bg-[#f8f8f8] text-[15px] text-black">
      <div className="w-4 shrink-0 rounded-r-md bg-[#a2a2a4] px-[2px] pt-1">
        <span className="block h-1 w-3 bg-[repeating-linear-gradient(90deg,#222_0_1px,#aaa_1px_2px)]" />
      </div>
      <div className="flex min-w-0 flex-1 flex-col">
        <div className="flex h-10 border-b border-[#a9ab9c]">
          <div className="min-w-0 flex-1 pl-[2px]">
            <p className="font-[Liberation_Mono,monospace] text-[13px] leading-4">...........</p>
            <p className="flex items-baseline gap-[2px] leading-4 whitespace-pre">
              <Mono>Autodesk DWG</Mono>。<Mono>{'  '}</Mono>此文件上次由<Mono> Autodesk </Mono>应用程序或<Mono> Autodesk </Mono>许可的应用程序保存，是可靠的<Mono> DWG</Mono>。
            </p>
          </div>
          <div className="flex w-[18px] flex-col items-center justify-between bg-[#f2f2ea]">
            <ScrollButton dir="up" />
            <ScrollButton dir="down" />
          </div>
        </div>
        <div className="flex h-[18px] items-center">
          <label className="flex flex-1 items-baseline pl-[2px] leading-4">
            命令<Mono>:</Mono>
            <input className="ml-2 h-4 flex-1 bg-transparent outline-none" />
          </label>
          <div className="flex h-full items-center bg-[#f2f2ea]">
            <ScrollButton dir="left" />
            <Thumb />
            <span className="w-4" />
            <ScrollButton dir="right" />
          </div>
          <span className="h-full w-[18px] bg-[#e6e6d8]" />
        </div>
      </div>
    </section>
  );
}

function StatusButton({ name, active }: { name: string; active?: boolean }) {
  return (
    <button
      aria-label={name}
      className={`flex h-full w-[22px] shrink-0 items-start border-r border-[#55555a] pt-[2px] pl-[2px] ${active ? 'bg-linear-to-b from-[#d5eef5] to-[#9fd0de]' : 'bg-linear-to-b from-[#c2c2c6] to-[#a2a2a6]'}`}
    >
      <Icon name={name} />
    </button>
  );
}

function StatusBar() {
  return (
    <footer className="flex h-[22px] shrink-0 items-stretch border-t border-[#2c2c2e] bg-linear-to-b from-[#8e8e92] to-[#7c7c80] text-xs text-black">
      <div className="flex w-[319px] shrink-0 items-baseline gap-3 pl-[7px] leading-[21px] whitespace-pre">
        <span className="flex items-baseline">英科宇机械<span className="font-[DejaVu_Sans_Mono,monospace] text-[10px]">CAD2010</span></span>
        <span className="font-[DejaVu_Sans_Mono,monospace] text-[10px]">763.9160, 457.6009, 0.0000</span>
      </div>
      {['Snap', 'Grid display', 'Ortho', 'Polar'].map((n) => <StatusButton key={n} name={n} />)}
      {['Osnap', 'Otrack', 'DUCS'].map((n) => <StatusButton key={n} name={n} active />)}
      {['Dyn', 'LWT', 'Quick properties'].map((n) => <StatusButton key={n} name={n} />)}
      <span className="flex-2" />
      <button className="w-[30px] shrink-0 border-r border-[#55555a] bg-[#b2b2b6]">模型</button>
      <StatusButton name="Layout" />
      <StatusButton name="Quick view" />
      <span className="flex-3" />
      {['Pan', 'Zoom', 'Wheel', 'Show motion'].map((n) => <StatusButton key={n} name={n} />)}
      <span className="flex-3" />
      <button className="flex w-[54px] shrink-0 items-center gap-[3px] border-r border-[#55555a] bg-[#b2b2b6] pl-[2px] font-[DejaVu_Sans_Mono,monospace] text-[10px]">
        <svg viewBox="0 0 18 18" className="size-4 shrink-0" fill="none" stroke={INK}>{compass}</svg>
        1:1
        <Caret />
      </button>
      <StatusButton name="Annotation visibility" />
      <StatusButton name="Annotation auto scale" />
      <span className="w-[6px] shrink-0" />
      <button className="flex w-[106px] shrink-0 items-center gap-[2px] bg-[#b2b2b6] pl-[2px] whitespace-pre">
        <svg viewBox="0 0 18 18" className="size-[18px] shrink-0" fill="none" stroke="#555">
          <circle cx="9" cy="9" r="7" strokeWidth="2" strokeDasharray="2.75" />
          <circle cx="9" cy="9" r="5.5" fill="#eee" />
          <circle cx="9" cy="9" r="2" fill="#aaa" />
        </svg>
        <span className="font-[DejaVu_Sans_Mono,monospace] text-[10px]">AutoCAD</span> 经典
        <Caret />
      </button>
      <button aria-label="Lock" className="flex w-[30px] shrink-0 items-start border-r border-[#55555a] bg-[#8f8f93] pt-px pl-1"><Icon name="Lock" /></button>
      <button aria-label="Status bar menu" className="flex w-[11px] shrink-0 items-center justify-center bg-[#b2b2b6]"><Caret /></button>
      <StatusButton name="Clean screen" />
      <span className="w-[2px]" />
    </footer>
  );
}

function UploadWidget() {
  return (
    <button className="absolute top-[161px] right-[10px] flex h-[25px] w-[105px] items-stretch overflow-hidden rounded-sm border border-[#3b97d3] text-xs text-[#1d4f7a]">
      <span className="flex w-[30px] items-center justify-center bg-[#1f8fdd]">
        <svg viewBox="0 0 24 20" className="h-5 w-6" fill="none" stroke="#fff" strokeWidth="2.5">
          <circle cx="13" cy="6.5" r="4.5" />
          <circle cx="6.5" cy="12.5" r="4" />
          <path d="M10 15l6-6a4 4 0 1 1 0 7c-2 0-3-1-4-3" />
        </svg>
      </span>
      <span className="flex flex-1 items-center justify-center bg-linear-to-b from-[#e6f4fd] to-[#9fd0f2]">拖拽上传</span>
    </button>
  );
}

export default function App() {
  return (
    <div className="relative flex h-screen min-h-[640px] flex-col overflow-hidden bg-[#67676a] font-[Noto_Sans_CJK_SC,sans-serif]">
      <Header />
      <Toolbars />
      <Workspace />
      <CommandLine />
      <StatusBar />
      <div className="flex h-1 shrink-0">
        <span className="w-[9%] rounded-tr bg-[#3c9a3c]" />
        <span className="flex-1 bg-[#2b6fe0]" />
        <span className="w-[16%] bg-[#18a5ee]" />
      </div>
      <UploadWidget />
    </div>
  );
}
